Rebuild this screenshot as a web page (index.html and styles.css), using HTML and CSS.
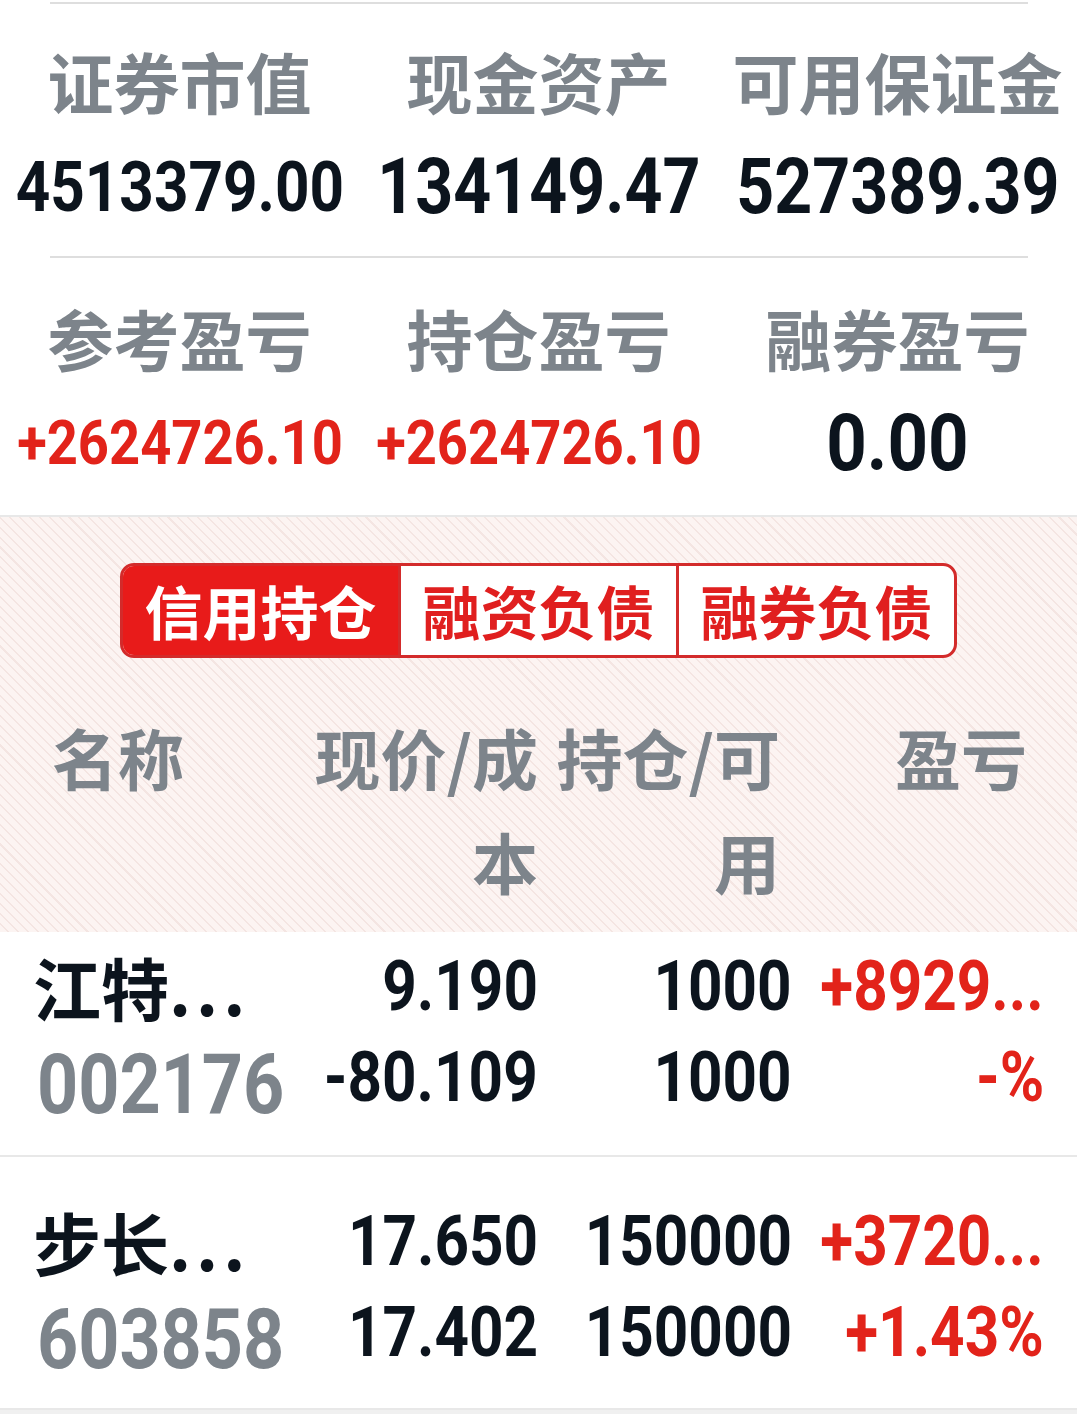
FILE: index.html
```html
<!DOCTYPE html>
<html lang="zh-CN">
<head>
<meta charset="utf-8">
<title>信用持仓</title>
<link rel="stylesheet" href="styles.css">
</head>
<body>
<div class="page">
  <section class="summary">
    <div class="rule"></div>
    <div class="stats stats-top">
      <div class="lbl">证券市值</div>
      <div class="lbl">现金资产</div>
      <div class="lbl">可用保证金</div>
      <div class="val"><span class="n">4513379.00</span></div>
      <div class="val val-fit"><span class="n">134149.47</span></div>
      <div class="val val-fit"><span class="n">527389.39</span></div>
    </div>
    <div class="rule rule-mid"></div>
    <div class="stats stats-bottom">
      <div class="lbl">参考盈亏</div>
      <div class="lbl">持仓盈亏</div>
      <div class="lbl">融券盈亏</div>
      <div class="val val-sm up"><span class="n">+2624726.10</span></div>
      <div class="val val-sm up"><span class="n">+2624726.10</span></div>
      <div class="val val-lg"><span class="n">0.00</span></div>
    </div>
  </section>

  <section class="holdings-head">
    <div class="seg">
      <div class="seg-item active">信用持仓</div>
      <div class="seg-item">融资负债</div>
      <div class="seg-item">融券负债</div>
    </div>
    <div class="thead">
      <div class="th th-name">名称</div>
      <div class="th">现价/成本</div>
      <div class="th">持仓/可用</div>
      <div class="th">盈亏</div>
    </div>
  </section>

  <div class="row row-first">
    <div class="cell name">
      <div class="nm">江特<span class="ell">...</span></div>
      <div class="code"><span class="n">002176</span></div>
    </div>
    <div class="cell num">
      <div><span class="n">9.190</span></div>
      <div><span class="n">-80.109</span></div>
    </div>
    <div class="cell num">
      <div><span class="n">1000</span></div>
      <div><span class="n">1000</span></div>
    </div>
    <div class="cell num up">
      <div><span class="n">+8929...</span></div>
      <div><span class="n">-%</span></div>
    </div>
  </div>

  <div class="row">
    <div class="cell name">
      <div class="nm">步长<span class="ell">...</span></div>
      <div class="code"><span class="n">603858</span></div>
    </div>
    <div class="cell num">
      <div><span class="n">17.650</span></div>
      <div><span class="n">17.402</span></div>
    </div>
    <div class="cell num">
      <div><span class="n">150000</span></div>
      <div><span class="n">150000</span></div>
    </div>
    <div class="cell num up">
      <div><span class="n">+3720...</span></div>
      <div><span class="n">+1.43%</span></div>
    </div>
  </div>

  <div class="footer-band"></div>
</div>
</body>
</html>
```
FILE: styles.css
```css
* { box-sizing: border-box; }

html, body {
  margin: 0;
  padding: 0;
  background: #ffffff;
}

body {
  font-family: "Noto Sans CJK SC", "Noto Sans", sans-serif;
  color: #0c141d;
}

.page {
  width: 1077px;
  overflow: hidden;
}

/* condensed numeric glyphs */
.n {
  display: inline-block;
  font-family: Roboto, "Liberation Sans", sans-serif;
  font-weight: 700;
  transform: scaleX(0.86);
  transform-origin: 50% 50%;
  white-space: nowrap;
}

/* ---------- summary ---------- */
.summary {
  padding-top: 2px;
  padding-bottom: 27px;
  border-bottom: 2px solid #e8e8e8;
}

.rule {
  height: 2px;
  margin: 0 49px 0 50px;
  background: #dedede;
}

.rule-mid {
  margin-top: 24px;
}

.stats {
  display: grid;
  grid-template-columns: repeat(3, minmax(0, 1fr));
  text-align: center;
}

.stats-top {
  margin-top: 31px;
  row-gap: 17px;
}

.stats-bottom {
  margin-top: 34px;
  row-gap: 16px;
}

.lbl {
  font-size: 66px;
  font-weight: 700;
  line-height: 90px;
  color: #7d848b;
  white-space: nowrap;
}

.val {
  display: flex;
  justify-content: center;
  align-items: center;
  height: 90px;
  font-family: Roboto, "Liberation Sans", sans-serif;
  font-size: 70px;
  line-height: 90px;
}

.val-fit {
  font-size: 77px;
}

.val-sm {
  font-size: 61px;
}

.val-sm .n {
  transform: scaleX(0.89);
}

.val-lg {
  font-size: 80px;
}

.val-lg .n {
  transform: scaleX(0.885);
}

.up {
  color: #e2231a;
}

/* ---------- holdings header ---------- */
.holdings-head {
  padding-top: 46px;
  padding-bottom: 20px;
  background-color: #fcf4f2;
  background-image: repeating-linear-gradient(45deg, rgba(0,0,0,0) 0 5.5px, #f4e5e2 5.5px 7px);
}

.seg {
  display: flex;
  width: 837px;
  height: 95px;
  margin: 0 auto;
  border: 3px solid #d32b2b;
  border-radius: 14px;
  overflow: hidden;
  background: #ffffff;
}

.seg-item {
  flex: 1;
  text-align: center;
  font-size: 58px;
  font-weight: 700;
  line-height: 89px;
  color: #e01f1f;
  border-left: 3px solid #d32b2b;
  white-space: nowrap;
}

.seg-item:first-child {
  border-left: 0;
}

.seg-item.active {
  background: #e81b1a;
  color: #ffffff;
}

.thead {
  display: grid;
  grid-template-columns: 232px 254px 242px 247px;
  padding: 0 50px 0 52px;
  margin-top: 46px;
}

.th {
  font-size: 66px;
  font-weight: 700;
  line-height: 104px;
  color: #7d848b;
  text-align: right;
}

.th-name {
  text-align: left;
}

/* ---------- rows ---------- */
.row {
  display: grid;
  grid-template-columns: repeat(3, minmax(0, 254px)) minmax(0, 252px);
  padding: 39px 33px 23px 30px;
  border-bottom: 2px solid #e8e8e8;
}

.row-first {
  padding-top: 9px;
  padding-bottom: 25px;
}

.row:last-of-type {
  border-bottom: 0;
}

.cell {
  white-space: nowrap;
  min-width: 0;
}

.name {
  padding-left: 3px;
}

.nm {
  font-size: 68px;
  font-weight: 700;
  line-height: 91px;
  height: 91px;
  color: #0c141d;
}

.ell {
  letter-spacing: 5px;
}

.code {
  margin-top: 7px;
  padding-left: 4px;
  height: 91px;
  font-family: Roboto, "Liberation Sans", sans-serif;
  font-size: 84px;
  line-height: 91px;
  color: #7d848b;
}

.code .n {
  transform: scaleX(0.855);
  transform-origin: 0 50%;
}

.num {
  font-family: Roboto, "Liberation Sans", sans-serif;
  font-size: 70px;
  line-height: 91px;
}

.num > div {
  display: flex;
  justify-content: flex-end;
  align-items: center;
  height: 91px;
}

.num .n {
  flex: none;
  transform-origin: 100% 50%;
}

.footer-band {
  height: 10px;
  background: #f0f0f0;
}
```
